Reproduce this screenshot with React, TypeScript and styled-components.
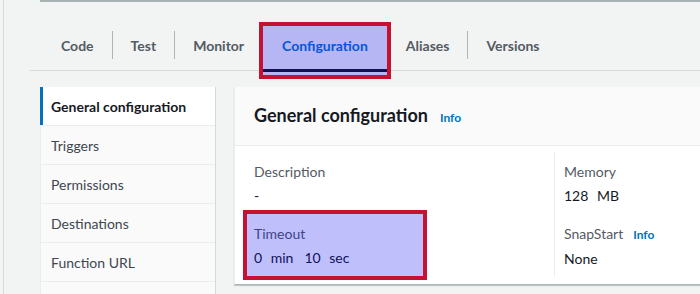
import React from "react";
import styled, { createGlobalStyle, css } from "styled-components";

const GlobalStyle = createGlobalStyle`
  html, body {
    margin: 0;
    padding: 0;
    background: #f2f3f3;
  }
  body {
    font-family: Lato, "Liberation Sans", sans-serif;
    color: #16191f;
  }
`;

// annotation colours (screenshot markup over the console)
const markRed = "#c41230";
const markFill = "rgba(0, 0, 245, 0.25)";

const highlight = css`
  position: relative;
  outline: 4px solid ${markRed};
  &::after {
    content: "";
    position: absolute;
    inset: 0;
    background: ${markFill};
    pointer-events: none;
  }
`;

const Frame = styled.div`
  height: 294px;
  margin-left: 3px;
  border-left: 1px solid #d5dbdb;
  padding-left: 26px;
  overflow: hidden;
  background: #f2f3f3;
`;

const TopRule = styled.div`
  height: 2px;
  margin-left: 10px;
  background: #a9b3b5;
`;

const TabBar = styled.div`
  display: flex;
  align-items: flex-end;
  height: 68px;
  padding-left: 13px;
  border-bottom: 1px solid #d5dbdb;
`;

const Tab = styled.div<{ $active?: boolean }>`
  height: 44px;
  padding: 0 18px 5px;
  box-sizing: border-box;
  display: flex;
  align-items: center;
  font-size: 14px;
  font-weight: 700;
  color: ${(p) => (p.$active ? "#0972d3" : "#545b64")};
  white-space: nowrap;

  ${(p) =>
    p.$active &&
    css`
      height: 49px;
      margin-bottom: -5px;
      padding: 0 19px 10px;
      background: linear-gradient(#16191f, #16191f) left bottom 3px / 100% 3px
        no-repeat;
      ${highlight}
    `}
`;

const TabDivider = styled.span<{ $hidden?: boolean }>`
  width: 1px;
  height: 28px;
  margin-bottom: 11px;
  background: ${(p) => (p.$hidden ? "transparent" : "#aab7b8")};
`;

const Workspace = styled.div`
  display: flex;
  align-items: flex-start;
  gap: 18px;
  margin: 16px 0 0 10px;
`;

const SideNav = styled.nav`
  flex: 0 0 176px;
  min-height: 240px;
  box-sizing: border-box;
  border-right: 1px solid #d5dbdb;
  border-left: 1px solid #eaeded;
  background: #fafafa;
`;

const NavItem = styled.div<{ $active?: boolean }>`
  height: 39px;
  box-sizing: border-box;
  display: flex;
  align-items: center;
  padding-left: 10px;
  font-size: 14px;
  border-bottom: 1px solid #eaeded;
  color: #414750;

  ${(p) =>
    p.$active &&
    css`
      background: #fff;
      color: #16191f;
      font-weight: 700;
      margin-left: -1px;
      padding-left: 11px;
      box-shadow: inset 3px 0 0 #0073bb;
    `}
`;

const Panel = styled.section`
  flex: 0 0 520px;
  background: #fff;
  border-left: 1px solid #eaeded;
  border-bottom: 1px solid #aab7b8;
  box-shadow: 0 1px 1px rgba(0, 28, 36, 0.2);
`;

const PanelHeader = styled.header`
  height: 59px;
  box-sizing: border-box;
  display: flex;
  align-items: baseline;
  gap: 12px;
  padding: 15px 19px 0;
  background: #fafafa;
  border-bottom: 1px solid #eaeded;
`;

const PanelTitle = styled.h2`
  margin: 0;
  font-size: 18px;
  line-height: 26px;
  font-weight: 700;
`;

const InfoLink = styled.a`
  font-size: 12px;
  font-weight: 700;
  color: #0073bb;
  text-decoration: none;
`;

const PanelBody = styled.div`
  display: grid;
  grid-template-columns: 319px 1fr;
  padding: 6px 0 7px;
`;

const Column = styled.div<{ $divided?: boolean }>`
  display: flex;
  flex-direction: column;
  padding-left: ${(p) => (p.$divided ? "9px" : "19px")};
  border-left: ${(p) => (p.$divided ? "1px solid #eaeded" : "none")};
`;

const Field = styled.div<{ $marked?: boolean }>`
  width: 162px;
  margin-left: -7px;
  padding: 9px 7px 6px;
  ${(p) => p.$marked && highlight}
`;

const FieldLabel = styled.div`
  display: flex;
  align-items: baseline;
  gap: 10px;
  font-size: 14px;
  line-height: 22px;
  color: #545b64;
`;

const FieldValue = styled.div`
  display: flex;
  gap: 11px;
  margin-top: 1px;
  font-size: 14px;
  line-height: 24px;
  color: #16191f;
  word-spacing: 5px;
`;

const tabs = ["Code", "Test", "Monitor", "Configuration", "Aliases", "Versions"];
const activeTab = 3;

const navItems = [
  "General configuration",
  "Triggers",
  "Permissions",
  "Destinations",
  "Function URL",
];

export default function App() {
  return (
    <>
      <GlobalStyle />
      <Frame>
        <TopRule />
        <TabBar>
          {tabs.map((t, i) => (
            <React.Fragment key={t}>
              {i > 0 && (
                <TabDivider $hidden={i === activeTab || i - 1 === activeTab} />
              )}
              <Tab $active={i === activeTab}>{t}</Tab>
            </React.Fragment>
          ))}
        </TabBar>

        <Workspace>
          <SideNav>
            {navItems.map((n, i) => (
              <NavItem key={n} $active={i === 0}>
                {n}
              </NavItem>
            ))}
          </SideNav>

          <Panel>
            <PanelHeader>
              <PanelTitle>General configuration</PanelTitle>
              <InfoLink href="#">Info</InfoLink>
            </PanelHeader>
            <PanelBody>
              <Column>
                <Field>
                  <FieldLabel>Description</FieldLabel>
                  <FieldValue>-</FieldValue>
                </Field>
                <Field $marked>
                  <FieldLabel>Timeout</FieldLabel>
                  <FieldValue>
                    <span>0 min</span>
                    <span>10 sec</span>
                  </FieldValue>
                </Field>
              </Column>
              <Column $divided>
                <Field>
                  <FieldLabel>Memory</FieldLabel>
                  <FieldValue>128 MB</FieldValue>
                </Field>
                <Field>
                  <FieldLabel>
                    SnapStart <InfoLink href="#">Info</InfoLink>
                  </FieldLabel>
                  <FieldValue>None</FieldValue>
                </Field>
              </Column>
            </PanelBody>
          </Panel>
        </Workspace>
      </Frame>
    </>
  );
}
